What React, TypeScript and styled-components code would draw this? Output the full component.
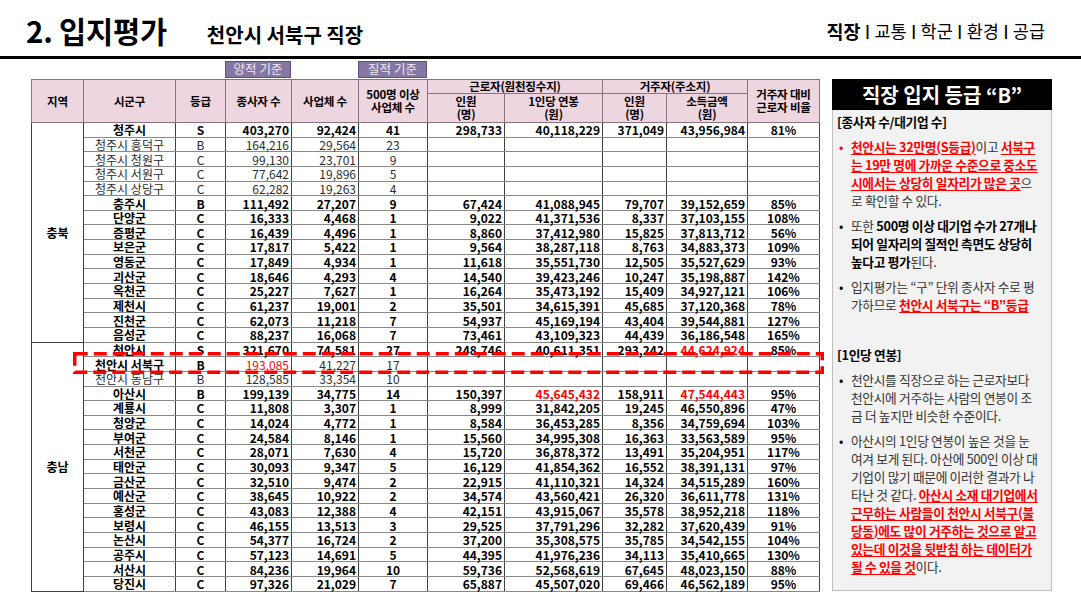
import React from "react";
import styled, { createGlobalStyle } from "styled-components";

const GlobalStyle = createGlobalStyle`
  html, body {
    margin: 0;
    padding: 0;
    background: #ffffff;
  }
  body {
    font-family: "Noto Sans CJK KR", "Noto Sans", sans-serif;
    color: #000;
  }
`;

const COLS = [52, 92, 50, 66, 67, 69, 77, 98, 64, 81, 72];
const RED = "#ff0000";

const Page = styled.div`
  width: 1081px;
  height: 608px;
  overflow: hidden;
`;

const TopBar = styled.header`
  box-sizing: border-box;
  height: 59px;
  padding: 6px 36px 0 26px;
  display: flex;
  align-items: center;
  justify-content: space-between;
  border-bottom: 3px solid #000;
`;

const TitleGroup = styled.div`
  display: flex;
  align-items: baseline;
  gap: 40px;
`;

const Title = styled.h1`
  margin: 0;
  font-size: 29.5px;
  font-weight: 700;
  letter-spacing: -0.2px;
  line-height: 1;
`;

const Subtitle = styled.h2`
  margin: 0;
  font-size: 20px;
  font-weight: 700;
  line-height: 1;
`;

const Nav = styled.nav`
  display: flex;
  align-items: center;
  line-height: 1;
`;

const NavItem = styled.span<{ $active?: boolean }>`
  font-weight: ${(p) => (p.$active ? 700 : 400)};
  font-size: ${(p) => (p.$active ? "18.5px" : "17.5px")};
`;

const NavSep = styled.span`
  margin: 0 5px;
  font-family: "Liberation Sans", Arial, sans-serif;
  font-size: 14px;
  font-weight: 700;
`;

const Body = styled.main`
  display: flex;
  gap: 13px;
  padding: 2px 0 0 31px;
`;

const LeftCol = styled.section`
  width: 788px;
`;

const BadgeRow = styled.div`
  display: grid;
  grid-template-columns: ${COLS.map((c) => `${c}px`).join(" ")};
  height: 17px;
  margin-bottom: 1px;
`;

const Badge = styled.span<{ $col: number }>`
  grid-column: ${(p) => p.$col};
  display: flex;
  align-items: center;
  justify-content: center;
  background: #8676a2;
  border: 1px solid #5f507c;
  color: #ece8f4;
  font-size: 12.5px;
  line-height: 1;
`;

const TableWrap = styled.div`
  position: relative;
`;

const Table = styled.table`
  width: 788px;
  table-layout: fixed;
  border-collapse: collapse;
  font-size: 12px;
  border: 1px solid #404040;
`;

const HeadRow = styled.tr<{ $h: number }>`
  height: ${(p) => p.$h}px;
`;

const Th = styled.th`
  background: #eed6e0;
  border: 1px solid #8a7280;
  font-size: 11.5px;
  font-weight: 700;
  line-height: 13px;
  padding: 0;
  text-align: center;
  vertical-align: middle;
  letter-spacing: -0.2px;
`;

const DataRow = styled.tr`
  height: 14.656px;
`;

const RegionCell = styled.td`
  border: 1px solid #404040;
  text-align: center;
  vertical-align: middle;
  font-weight: 700;
  padding: 0;
`;

const Cell = styled.td<{
  $align: "center" | "right";
  $bold: boolean;
  $red?: boolean;
}>`
  border-left: 1px solid #404040;
  border-right: 1px solid #404040;
  border-top: 1px solid #8a8a8a;
  border-bottom: 1px solid #8a8a8a;
  padding: 0 ${(p) => (p.$align === "right" ? "2px" : "0")} 0 0;
  line-height: 13px;
  white-space: nowrap;
  text-align: ${(p) => p.$align};
  font-weight: ${(p) => (p.$bold ? 700 : 400)};
  color: ${(p) => (p.$red ? RED : p.$bold ? "#000" : "#2b2b2b")};
`;

const FocusMark = styled.svg`
  position: absolute;
  left: 42px;
  top: 273px;
  overflow: visible;
  pointer-events: none;
`;

const Panel = styled.aside`
  margin-top: 18px;
  width: 220px;
  height: 512px;
  box-sizing: border-box;
  background: #f2f2f2;
  border: 1px solid #bfbfbf;
`;

const PanelTitle = styled.div`
  height: 31px;
  margin: -1px -1px 0;
  background: #000;
  color: #fff;
  display: flex;
  align-items: center;
  justify-content: center;
  font-size: 20px;
  font-weight: 700;
`;

const PanelBody = styled.div`
  padding: 3px 2px 0 4px;
  font-size: 12.7px;
  line-height: 18px;
  color: #333;
  letter-spacing: -0.3px;
`;

const SectionHead = styled.div<{ $gap?: number }>`
  margin-top: ${(p) => p.$gap ?? 0}px;
  font-weight: 700;
  color: #000;
`;

const Bullet = styled.div<{ $dot?: string }>`
  display: grid;
  grid-template-columns: 14px 1fr;
  margin-top: 7px;
  &::before {
    content: "•";
    color: ${(p) => p.$dot ?? "#000"};
    padding-left: 2px;
  }
`;

const Lines = styled.div`
  min-width: 0;
`;

const Line = styled.span`
  display: block;
  white-space: nowrap;
`;

const Em = styled.span`
  color: ${RED};
  font-weight: 700;
  text-decoration: underline;
  text-underline-offset: 2px;
`;

const Strong = styled.b`
  color: #000;
`;

type Kind = "main" | "sub" | "focus";
type Row = { kind: Kind; v: string[] };

const m = (...v: string[]): Row => ({ kind: "main", v });
const s = (...v: string[]): Row => ({ kind: "sub", v });

const REGIONS: { name: string; rows: Row[] }[] = [
  {
    name: "충북",
    rows: [
      m("청주시", "S", "403,270", "92,424", "41", "298,733", "40,118,229", "371,049", "43,956,984", "81%"),
      s("청주시 흥덕구", "B", "164,216", "29,564", "23"),
      s("청주시 청원구", "C", "99,130", "23,701", "9"),
      s("청주시 서원구", "C", "77,642", "19,896", "5"),
      s("청주시 상당구", "C", "62,282", "19,263", "4"),
      m("충주시", "B", "111,492", "27,207", "9", "67,424", "41,088,945", "79,707", "39,152,659", "85%"),
      m("단양군", "C", "16,333", "4,468", "1", "9,022", "41,371,536", "8,337", "37,103,155", "108%"),
      m("증평군", "C", "16,439", "4,496", "1", "8,860", "37,412,980", "15,825", "37,813,712", "56%"),
      m("보은군", "C", "17,817", "5,422", "1", "9,564", "38,287,118", "8,763", "34,883,373", "109%"),
      m("영동군", "C", "17,849", "4,934", "1", "11,618", "35,551,730", "12,505", "35,527,629", "93%"),
      m("괴산군", "C", "18,646", "4,293", "4", "14,540", "39,423,246", "10,247", "35,198,887", "142%"),
      m("옥천군", "C", "25,227", "7,627", "1", "16,264", "35,473,192", "15,409", "34,927,121", "106%"),
      m("제천시", "C", "61,237", "19,001", "2", "35,501", "34,615,391", "45,685", "37,120,368", "78%"),
      m("진천군", "C", "62,073", "11,218", "7", "54,937", "45,169,194", "43,404", "39,544,881", "127%"),
      m("음성군", "C", "88,237", "16,068", "7", "73,461", "43,109,323", "44,439", "36,186,548", "165%"),
    ],
  },
  {
    name: "충남",
    rows: [
      m("천안시", "S", "321,670", "74,581", "27", "248,746", "40,611,351", "293,242", "!44,624,924", "85%"),
      { kind: "focus", v: ["천안시 서북구", "B", "!193,085", "41,227", "17"] },
      s("천안시 동남구", "B", "128,585", "33,354", "10"),
      m("아산시", "B", "199,139", "34,775", "14", "150,397", "!45,645,432", "158,911", "!47,544,443", "95%"),
      m("계룡시", "C", "11,808", "3,307", "1", "8,999", "31,842,205", "19,245", "46,550,896", "47%"),
      m("청양군", "C", "14,024", "4,772", "1", "8,584", "36,453,285", "8,356", "34,759,694", "103%"),
      m("부여군", "C", "24,584", "8,146", "1", "15,560", "34,995,308", "16,363", "33,563,589", "95%"),
      m("서천군", "C", "28,071", "7,630", "4", "15,720", "36,878,372", "13,491", "35,204,951", "117%"),
      m("태안군", "C", "30,093", "9,347", "5", "16,129", "41,854,362", "16,552", "38,391,131", "97%"),
      m("금산군", "C", "32,510", "9,474", "2", "22,915", "41,110,321", "14,324", "34,515,289", "160%"),
      m("예산군", "C", "38,645", "10,922", "2", "34,574", "43,560,421", "26,320", "36,611,778", "131%"),
      m("홍성군", "C", "43,083", "12,388", "4", "42,151", "43,915,067", "35,578", "38,952,218", "118%"),
      m("보령시", "C", "46,155", "13,513", "3", "29,525", "37,791,296", "32,282", "37,620,439", "91%"),
      m("논산시", "C", "54,377", "16,724", "2", "37,200", "35,308,575", "35,785", "34,542,155", "104%"),
      m("공주시", "C", "57,123", "14,691", "5", "44,395", "41,976,236", "34,113", "35,410,665", "130%"),
      m("서산시", "C", "84,236", "19,964", "10", "59,736", "52,568,619", "67,645", "48,023,150", "88%"),
      m("당진시", "C", "97,326", "21,029", "7", "65,887", "45,507,020", "69,466", "46,562,189", "95%"),
    ],
  },
];

// column alignment for the 10 data columns after 지역
const ALIGN: ("center" | "right")[] = [
  "center", "center", "right", "right", "center",
  "right", "right", "right", "right", "center",
];

const DataCells = ({ row }: { row: Row }) => (
  <>
    {ALIGN.map((align, i) => {
      const raw = row.v[i] ?? "";
      const red = raw.startsWith("!");
      const text = red ? raw.slice(1) : raw;
      const bold = row.kind === "main" || (row.kind === "focus" && i < 2);
      return (
        <Cell key={i} $align={align} $bold={bold} $red={red}>
          {text}
        </Cell>
      );
    })}
  </>
);

const NAV = ["직장", "교통", "학군", "환경", "공급"];

export default function App() {
  return (
    <Page>
      <GlobalStyle />
      <TopBar>
        <TitleGroup>
          <Title>2. 입지평가</Title>
          <Subtitle>천안시 서북구 직장</Subtitle>
        </TitleGroup>
        <Nav>
          {NAV.map((n, i) => (
            <React.Fragment key={n}>
              {i > 0 && <NavSep>|</NavSep>}
              <NavItem $active={i === 0}>{n}</NavItem>
            </React.Fragment>
          ))}
        </Nav>
      </TopBar>

      <Body>
        <LeftCol>
          <BadgeRow>
            <Badge $col={4}>양적 기준</Badge>
            <Badge $col={6}>질적 기준</Badge>
          </BadgeRow>
          <TableWrap>
            <Table>
              <colgroup>
                {COLS.map((w, i) => (
                  <col key={i} style={{ width: w }} />
                ))}
              </colgroup>
              <thead>
                <HeadRow $h={14}>
                  <Th rowSpan={2}>지역</Th>
                  <Th rowSpan={2}>시군구</Th>
                  <Th rowSpan={2}>등급</Th>
                  <Th rowSpan={2}>종사자 수</Th>
                  <Th rowSpan={2}>사업체 수</Th>
                  <Th rowSpan={2}>
                    500명 이상
                    <br />
                    사업체 수
                  </Th>
                  <Th colSpan={2}>근로자(원천징수지)</Th>
                  <Th colSpan={2}>거주자(주소지)</Th>
                  <Th rowSpan={2}>
                    거주자 대비
                    <br />
                    근로자 비율
                  </Th>
                </HeadRow>
                <HeadRow $h={29}>
                  <Th>
                    인원
                    <br />
                    (명)
                  </Th>
                  <Th>
                    1인당 연봉
                    <br />
                    (원)
                  </Th>
                  <Th>
                    인원
                    <br />
                    (명)
                  </Th>
                  <Th>
                    소득금액
                    <br />
                    (원)
                  </Th>
                </HeadRow>
              </thead>
              <tbody>
                {REGIONS.map((region) =>
                  region.rows.map((row, i) => (
                    <DataRow key={`${region.name}-${i}`}>
                      {i === 0 && (
                        <RegionCell rowSpan={region.rows.length}>{region.name}</RegionCell>
                      )}
                      <DataCells row={row} />
                    </DataRow>
                  ))
                )}
              </tbody>
            </Table>
            <FocusMark width={751} height={22}>
              <rect
                x={1.75}
                y={1.75}
                width={747.5}
                height={18.5}
                fill="none"
                stroke={RED}
                strokeWidth={3.5}
                strokeDasharray="13 6"
              />
            </FocusMark>
          </TableWrap>
        </LeftCol>

        <Panel>
          <PanelTitle>직장 입지 등급 “B”</PanelTitle>
          <PanelBody>
            <SectionHead>[종사자 수/대기업 수]</SectionHead>
            <Bullet $dot={RED}>
              <Lines>
                <Line>
                  <Em>천안시는 32만명(S등급)</Em>이고 <Em>서북구</Em>
                </Line>
                <Line>
                  <Em>는 19만 명에 가까운 수준으로 중소도</Em>
                </Line>
                <Line>
                  <Em>시에서는 상당히 일자리가 많은 곳</Em>으
                </Line>
                <Line>로 확인할 수 있다.</Line>
              </Lines>
            </Bullet>
            <Bullet>
              <Lines>
                <Line>
                  또한 <Strong>500명 이상 대기업 수가 27개나</Strong>
                </Line>
                <Line>
                  <Strong>되어 일자리의 질적인 측면도 상당히</Strong>
                </Line>
                <Line>
                  <Strong>높다고 평가</Strong>된다.
                </Line>
              </Lines>
            </Bullet>
            <Bullet>
              <Lines>
                <Line>입지평가는 “구” 단위 종사자 수로 평</Line>
                <Line>
                  가하므로 <Em>천안시 서북구는 “B”등급</Em>
                </Line>
              </Lines>
            </Bullet>

            <SectionHead $gap={32}>[1인당 연봉]</SectionHead>
            <Bullet>
              <Lines>
                <Line>천안시를 직장으로 하는 근로자보다</Line>
                <Line>천안시에 거주하는 사람의 연봉이 조</Line>
                <Line>금 더 높지만 비슷한 수준이다.</Line>
              </Lines>
            </Bullet>
            <Bullet>
              <Lines>
                <Line>아산시의 1인당 연봉이 높은 것을 눈</Line>
                <Line>여겨 보게 된다. 아산에 500인 이상 대</Line>
                <Line>기업이 많기 때문에 이러한 결과가 나</Line>
                <Line>
                  타난 것 같다. <Em>아산시 소재 대기업에서</Em>
                </Line>
                <Line>
                  <Em>근무하는 사람들이 천안시 서북구(불</Em>
                </Line>
                <Line>
                  <Em>당동)에도 많이 거주하는 것으로 알고</Em>
                </Line>
                <Line>
                  <Em>있는데 이것을 뒷받침 하는 데이터가</Em>
                </Line>
                <Line>
                  <Em>될 수 있을 것</Em>이다.
                </Line>
              </Lines>
            </Bullet>
          </PanelBody>
        </Panel>
      </Body>
    </Page>
  );
}
